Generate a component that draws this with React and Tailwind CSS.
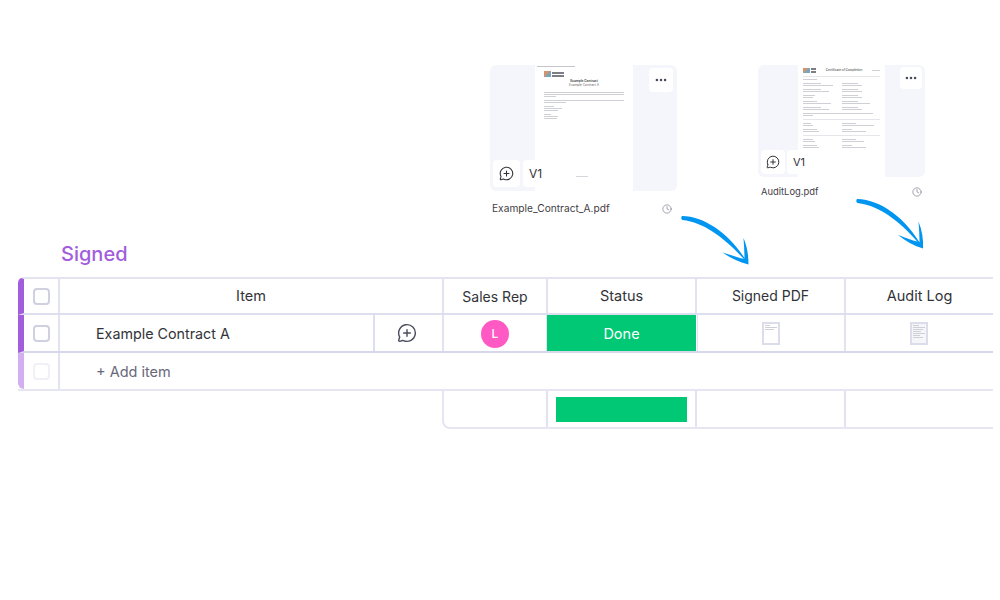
import { Clock, Ellipsis, MessageCirclePlus } from "lucide-react";

const bar = "h-px bg-[#cfd0d6]";

function FloatButton({ className, children }) {
  return (
    <div className={`absolute flex items-center justify-center rounded bg-white text-[#323338] ${className}`}>
      {children}
    </div>
  );
}

function Lines({ widths, className = "" }) {
  return (
    <div className={`flex flex-col gap-px ${className}`}>
      {widths.map((w, i) => (
        <div key={i} className={bar} style={{ width: w }} />
      ))}
    </div>
  );
}

function Logo({ className }) {
  return (
    <div className={`flex items-center gap-px ${className}`}>
      <div className="h-full w-[7px] bg-[linear-gradient(135deg,#d29470_50%,#7ba4bd_50%)]" />
      <div className="flex flex-1 flex-col gap-px">
        <div className="h-[2px] bg-[#7d7e85]" />
        <div className="h-[2px] bg-[#7d7e85]" />
      </div>
    </div>
  );
}

function ContractPage() {
  return (
    <div className="h-full w-[98px] bg-white pl-[9px] pr-2 pt-px">
      <div className="-ml-[7px] h-px w-[38px] bg-[#c4c5cb]" />
      <Logo className="mt-1 h-[6px] w-5" />
      <p className="mt-[2px] text-center text-[3.2px] leading-[4px] font-bold text-[#555]">Example Contract</p>
      <p className="text-center text-[3.2px] leading-[4px] text-[#666]">Example Contract A</p>
      <Lines className="mt-[5px]" widths={[80, 80, 12]} />
      <Lines className="mt-[3px]" widths={[80, 22]} />
      <Lines className="mt-[3px]" widths={[10, 18, 14]} />
      <Lines className="mt-[3px]" widths={[7, 14, 13]} />
      <div className="mt-[57px] ml-[32px] h-px w-3 bg-[#d5d6dc]" />
    </div>
  );
}

function AuditRow({ left = [18, 26], right = [16, 20] }) {
  return (
    <div className="grid grid-cols-2">
      <Lines widths={left} />
      <Lines widths={right} />
    </div>
  );
}

function AuditPage() {
  return (
    <div className="h-full w-[87px] overflow-hidden bg-white px-[5px] pt-[3px]">
      <div className="flex items-center justify-between">
        <Logo className="h-[5px] w-[13px]" />
        <p className="text-[3px] leading-[5px] font-semibold whitespace-nowrap text-[#666]">Certificate of Completion</p>
        <div className="h-px w-2 bg-[#cfd0d6]" />
      </div>
      <div className="mt-[3px] h-px bg-[#e6e6ea]" />
      <div className="mt-[2px] flex flex-col gap-[3px]">
        <Lines widths={[14]} />
        <AuditRow left={[18, 30]} />
        <AuditRow />
        <AuditRow left={[12, 10]} />
        <AuditRow left={[14, 28]} right={[16, 28]} />
        <AuditRow />
        <Lines widths={[70, 10]} />
        <div className="h-px bg-[#e6e6ea]" />
        <AuditRow left={[8, 10]} right={[14, 32]} />
        <AuditRow left={[14, 16]} right={[10, 24]} />
        <div className="h-px bg-[#e6e6ea]" />
        <AuditRow left={[10, 12]} right={[14, 22]} />
        <AuditRow left={[14, 16]} right={[10, 24]} />
      </div>
    </div>
  );
}

function Preview({ name, size, page, commentPos, versionPos, menuPos, iconSize }) {
  return (
    <div className={size.width}>
      <div className={`relative flex justify-center overflow-hidden rounded-md bg-[#f5f6fb] ${size.height}`}>
        {page}
        <FloatButton className={commentPos}>
          <MessageCirclePlus size={iconSize} strokeWidth={1.7} />
        </FloatButton>
        <FloatButton className={`${versionPos} text-[#44454b]`}>V1</FloatButton>
        <FloatButton className={menuPos}>
          <Ellipsis size={14} strokeWidth={2.4} className="text-[#4b4c5c]" />
        </FloatButton>
      </div>
      <div className={`flex items-center justify-between pl-[2px] text-[#3f4046] ${size.caption}`}>
        <span>{name}</span>
        <Clock size={10} strokeWidth={1.4} className="text-[#676879]" />
      </div>
    </div>
  );
}

function Arrows() {
  return (
    <svg className="absolute top-0 left-0" width="1000" height="300" fill="#0095f0">
      <path d="M682 216C706 216.5 731 235 748 263.5C728 241 706 222.5 682.5 220C681 219.5 681 217 682 216Z" />
      <path d="M743.5 238C747 246 748.5 255 748.5 264.5C738 262 730 257.5 722.5 252.5C731 255 739 258 744.5 259C744.5 252 744 245 743.5 238Z" />
      <path d="M857 199C881 199.5 906 218 922.5 247.5C903 224 881 205.5 857.5 203C856 202.5 856 200 857 199Z" />
      <path d="M918.5 221.5C922 230 923.5 239 923 248.5C913 245.5 905 240.5 898 235C906 238 914 241 919.5 242C919.5 235 919 228 918.5 221.5Z" />
    </svg>
  );
}

function Thumb({ className = "bg-white", children }) {
  return <div className={`h-[23px] w-[18px] border-2 border-[#dcdcea] px-px pt-px ${className}`}>{children}</div>;
}

const rowGrid = "grid h-[38px] grid-cols-[36px_384px_104px_149px_149px_147px] border-b-2 border-[#dedfee]";
const cell = "flex items-center justify-center border-r-2 border-[#e2e2f0]";

export default function App() {
  return (
    <div className="relative h-[600px] w-[1000px] overflow-hidden bg-white pt-[65px] font-['Inter',sans-serif] text-[#323338]">
      <div className="ml-[490px] flex h-[153px] items-start gap-[81px]">
        <Preview
          name="Example_Contract_A.pdf"
          size={{ width: "w-[187px]", height: "h-[126px] text-[12px]", caption: "mt-[10px] pr-[5px] text-[10.2px]" }}
          page={<ContractPage />}
          commentPos="bottom-1 left-[3px] size-[27px]"
          versionPos="bottom-1 left-[33px] h-[27px] w-[25px]"
          menuPos="top-[3px] right-1 size-6"
          iconSize={15}
        />
        <Preview
          name="AuditLog.pdf"
          size={{ width: "w-[167px]", height: "h-[112px] text-[11px]", caption: "mt-2 pl-[3px] pr-[3px] text-[9.4px]" }}
          page={<AuditPage />}
          commentPos="bottom-[3px] left-[3px] size-6"
          versionPos="bottom-[3px] left-[29px] h-6 w-6"
          menuPos="top-[2px] right-[3px] size-[22px]"
          iconSize={14}
        />
      </div>

      <h2 className="mt-[20px] ml-[61px] h-[39px] text-[20px] leading-[33px] font-medium text-[#a25ddc]">Signed</h2>

      <div className="ml-[18px] w-[975px] text-[14.5px]">
        <div className={`${rowGrid} rounded-tl-md border-t-2 border-l-[6px] border-t-[#e4e4f1] border-l-[#a25ddc]`}>
          <div className={cell}>
            <div className="size-[17px] rounded-sm border-2 border-[#cfd0e0]" />
          </div>
          <div className={cell}>Item</div>
          <div className={`${cell} text-[14px]`}>Sales Rep</div>
          <div className={cell}>Status</div>
          <div className={`${cell} pb-px text-[14px]`}>Signed PDF</div>
          <div className="flex items-center justify-center">Audit Log</div>
        </div>

        <div className={`${rowGrid} border-l-[6px] border-b-[#d6d7e8] border-l-[#a25ddc]`}>
          <div className={cell}>
            <div className="size-[17px] rounded-sm border-2 border-[#cfd0e0]" />
          </div>
          <div className="flex border-r-2 border-[#e2e2f0]">
            <div className="flex flex-1 items-center pt-px pl-[36px] text-[14.3px]">Example Contract A</div>
            <div className="flex w-[69px] items-center justify-center border-l-2 border-[#dedfee] pr-[3px] text-[#4b4c5c]">
              <MessageCirclePlus size={20} strokeWidth={1.7} />
            </div>
          </div>
          <div className={`${cell} pt-px`}>
            <div className="flex size-7 items-center justify-center rounded-full bg-[#ff5ac4] text-[12px] font-medium text-white">L</div>
          </div>
          <div className="-ml-px mr-px flex items-center justify-center bg-[#00c875] pt-px text-[14.5px] text-white">Done</div>
          <div className={`${cell} border-l border-l-[#e2e2f0] pr-px`}>
            <Thumb>
              <Lines widths={[5, 12, 9]} />
            </Thumb>
          </div>
          <div className="flex items-center justify-center pr-px">
            <Thumb className="bg-[#f6f6fa]">
              <Lines widths={[6, 12, 10, 8, 12, 7, 10]} />
            </Thumb>
          </div>
        </div>

        <div className="flex h-[38px] border-b-2 border-[#e6e6f2]">
          <div className="flex w-[42px] items-center justify-center rounded-bl-md border-r-2 border-l-[6px] border-r-[#e2e2f0] border-l-[#d3aef0]">
            <div className="size-[17px] rounded-sm border-2 border-[#f0f0f6]" />
          </div>
          <div className="flex items-center pt-px pl-[36px] text-[14.5px] text-[#676879]">+ Add item</div>
        </div>

        <div className="ml-[424px] grid h-[38px] grid-cols-[104px_149px_149px_147px] rounded-bl-lg border-b-2 border-l-2 border-[#e6e6f2]">
          <div className="border-r-2 border-[#e2e2f0]" />
          <div className={cell}>
            <div className="h-[25px] w-[131px] bg-[#00c875]" />
          </div>
          <div className="border-r-2 border-[#e2e2f0]" />
          <div />
        </div>
      </div>

      <Arrows />
    </div>
  );
}
